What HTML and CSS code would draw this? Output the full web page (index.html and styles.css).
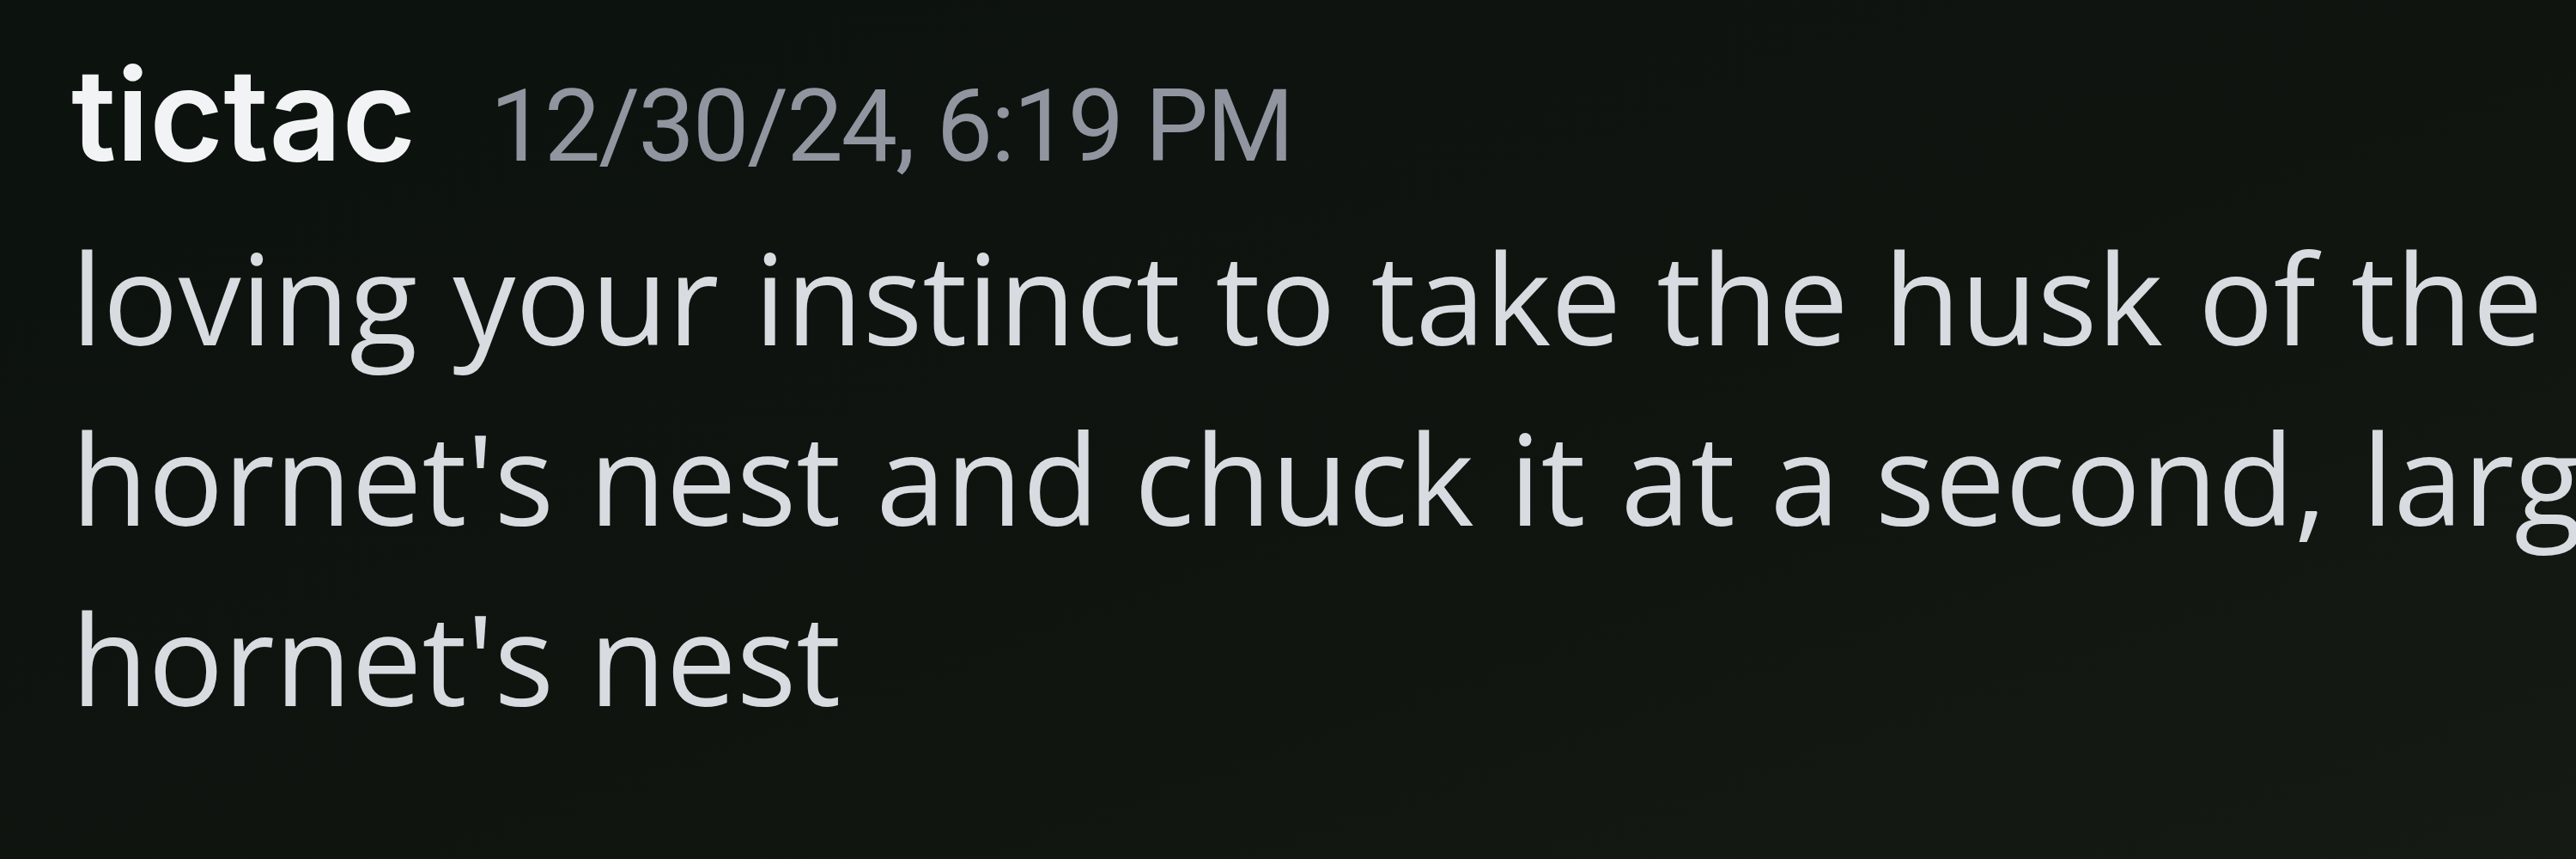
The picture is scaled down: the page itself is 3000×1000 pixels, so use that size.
FILE: index.html
```html
<!DOCTYPE html>
<html lang="en">
<head>
<meta charset="utf-8">
<title>tictac message</title>
<link rel="stylesheet" href="styles.css">
</head>
<body>
<main class="chat">
  <article class="message">
    <header class="message-header">
      <span class="username">tictac</span>
      <time class="timestamp">12/30/24, 6:19 PM</time>
    </header>
    <p class="message-body">
      <span class="line">loving your instinct to take the husk of the previous</span>
      <span class="line">hornet's nest and chuck it at a second, larger</span>
      <span class="line">hornet's nest</span>
    </p>
  </article>
</main>
</body>
</html>
```
FILE: styles.css
```css
html, body {
  margin: 0;
  padding: 0;
  width: 3000px;
  height: 1000px;
  overflow: hidden;
}

body {
  background: linear-gradient(160deg, #0c120e 0%, #0f140f 55%, #151a14 100%);
}

.chat {
  padding: 60px 0 0 83px;
}

.message-header {
  display: flex;
  align-items: baseline;
  gap: 86px;
}

.username {
  font-family: Inter, "Noto Sans", sans-serif;
  font-weight: 600;
  font-size: 148px;
  line-height: 1;
  color: #f2f3f5;
  letter-spacing: 0;
}

.timestamp {
  font-family: Roboto, "Liberation Sans", sans-serif;
  font-weight: 400;
  font-size: 117px;
  line-height: 1;
  color: #91959f;
  letter-spacing: -2.3px;
}

.message-body {
  margin: 33px 0 0 0;
  font-family: "Open Sans", "Noto Sans", sans-serif;
  font-size: 146px;
  line-height: 210px;
  color: #d8dbdf;
  white-space: nowrap;
  word-spacing: 3px;
}

.line {
  display: block;
}
```
